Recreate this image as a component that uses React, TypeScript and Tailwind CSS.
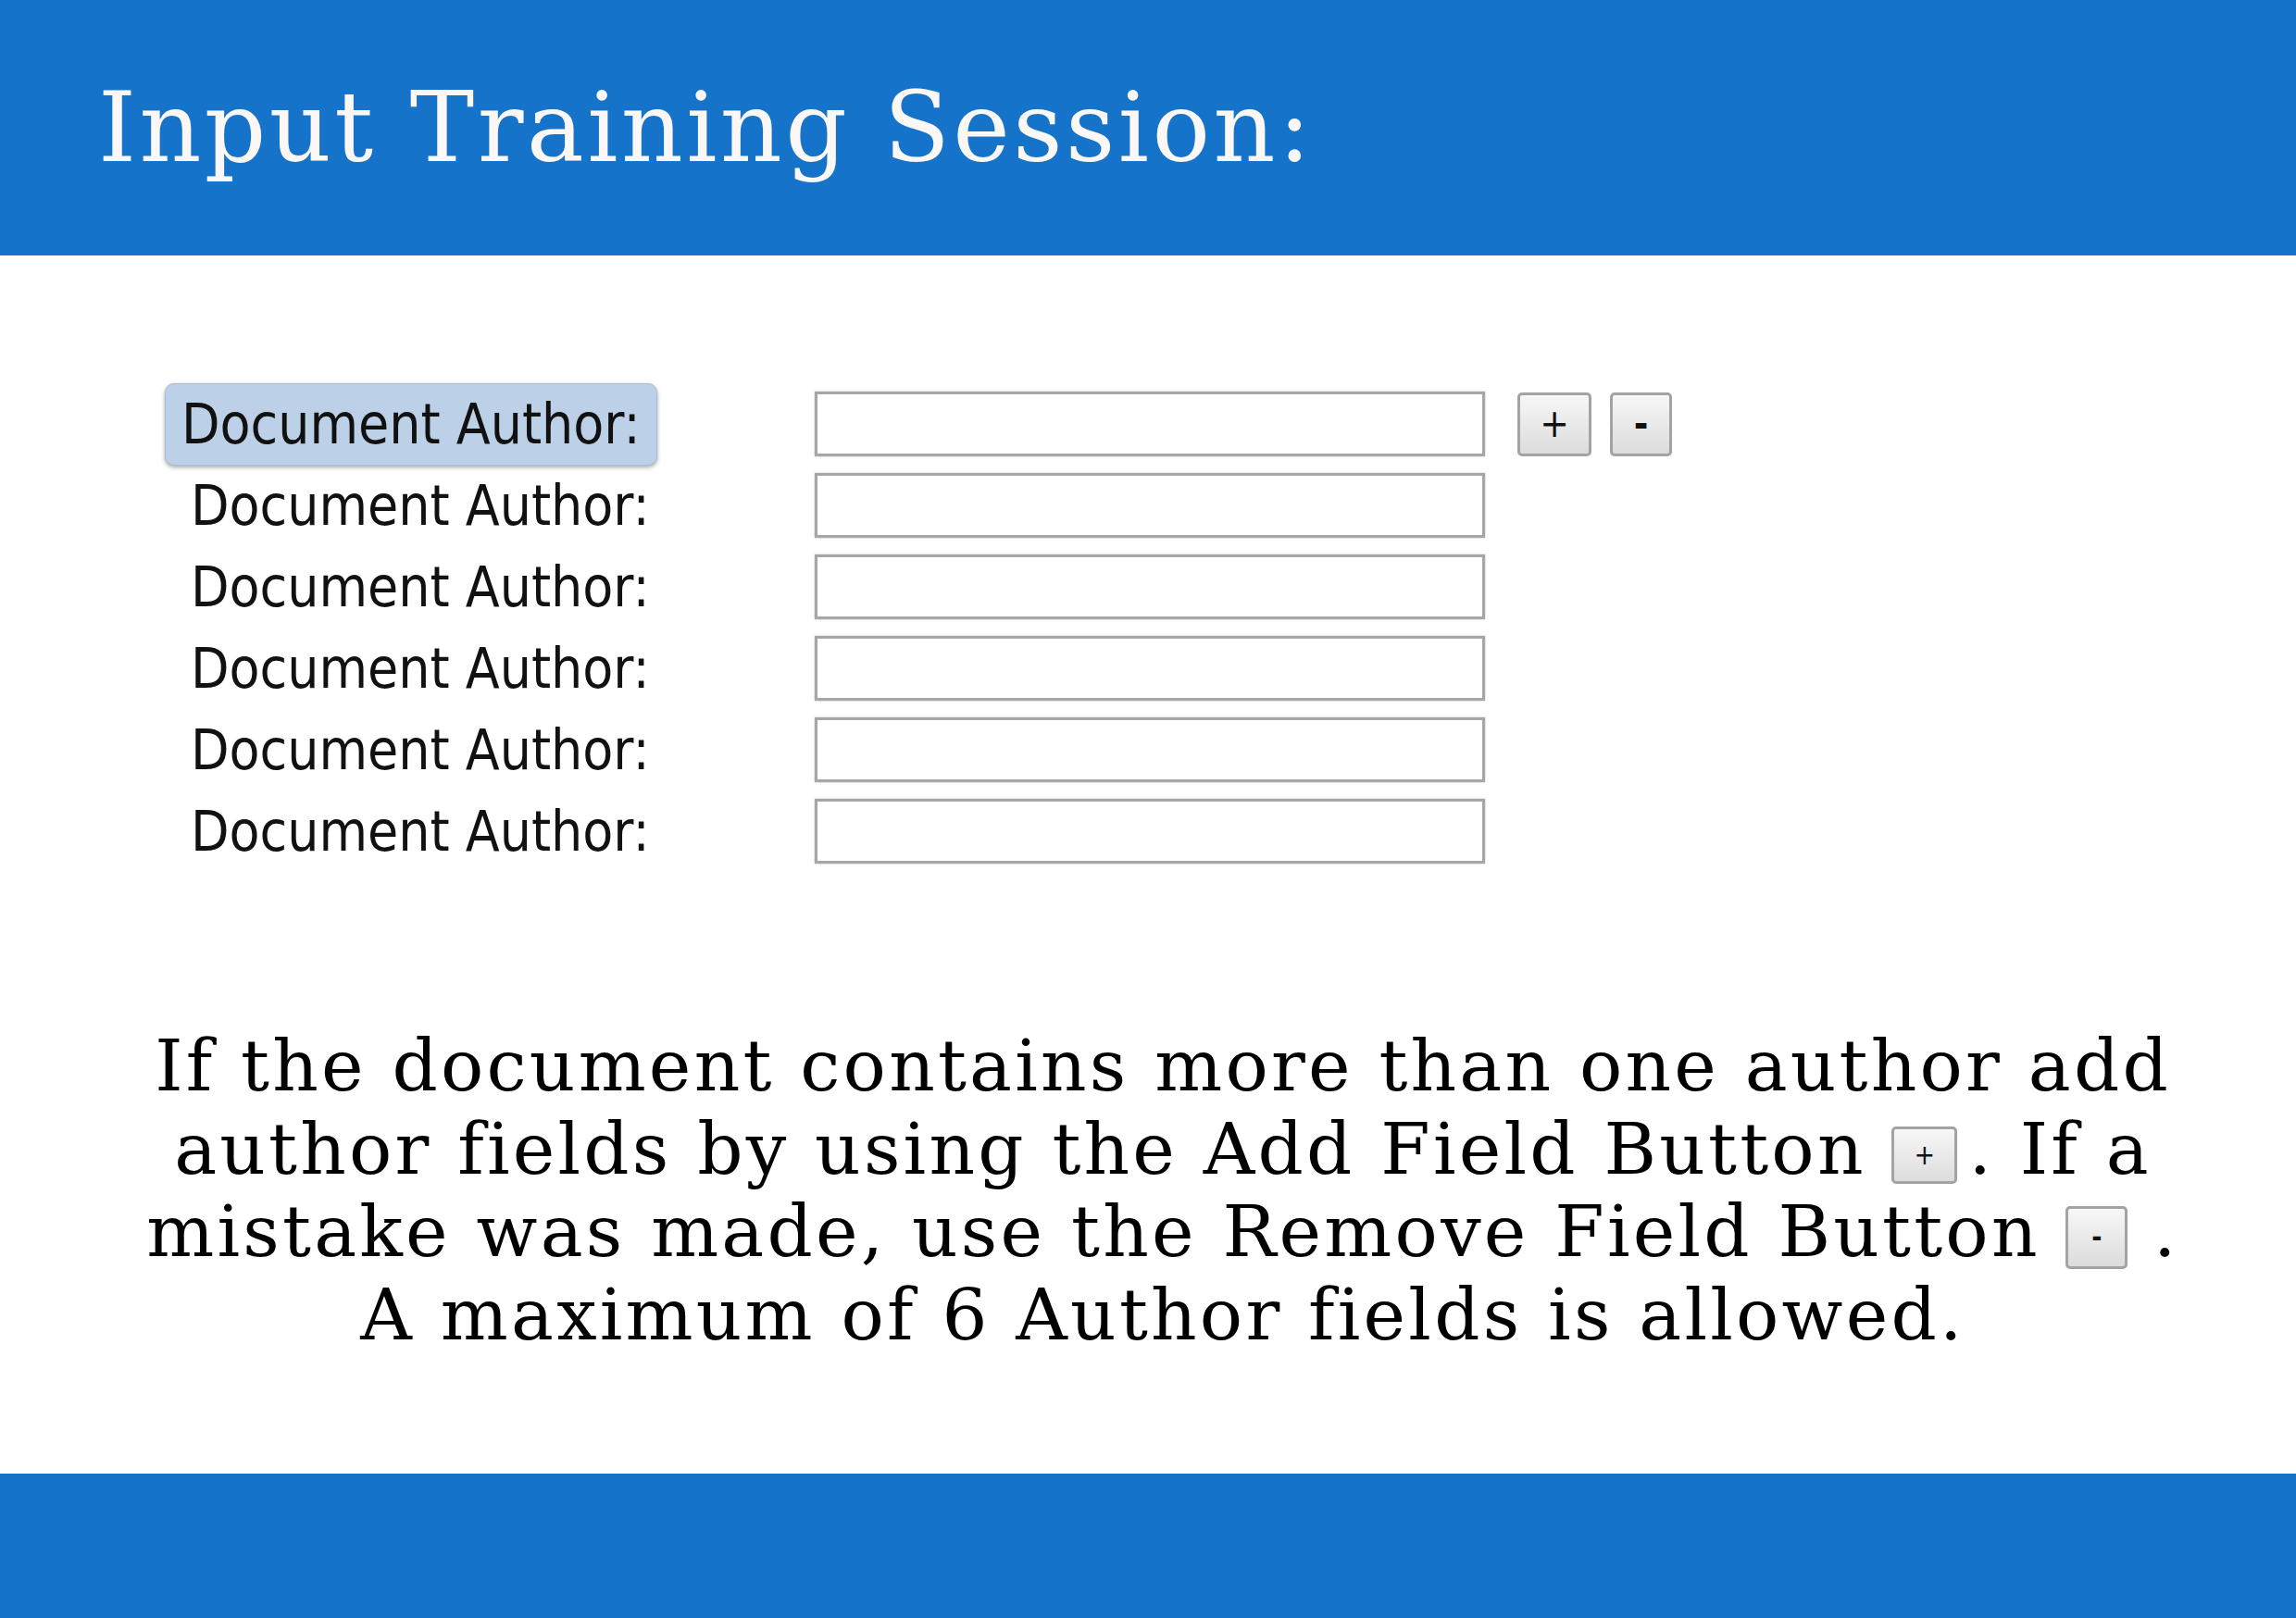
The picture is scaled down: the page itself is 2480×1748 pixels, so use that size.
import React from "react";

const serif = "font-['DejaVu_Serif',_'Liberation_Serif',_serif]";
const sansCond = "font-['DejaVu_Sans_Condensed',_'DejaVu_Sans',_sans-serif]";

function SmallButton({ sign, className }: { sign: string; className: string }) {
  return (
    <span
      className={`inline-flex items-center justify-center align-middle border-[3px] border-[#a3a3a3] rounded-[5px] bg-linear-to-b from-[#f7f7f7] to-[#dcdcdc] text-[#111] tracking-normal ${sansCond} ${className}`}
    >
      {sign}
    </span>
  );
}

function AuthorRow({ first }: { first?: boolean }) {
  return (
    <div className="flex items-center h-[70px]">
      <div className="w-[702px] flex items-center">
        {first ? (
          <div className="h-[89px] w-[532px] flex items-center pl-[17px] rounded-[10px] bg-[#bcd1e7] border border-[#a9bed6] shadow-[0_2px_4px_rgba(0,0,0,0.35)]">
            <span className={`text-[60px] leading-none text-[#111] ${sansCond}`}>Document Author:</span>
          </div>
        ) : (
          <span className={`pl-[28px] text-[60px] leading-none text-[#111] ${sansCond}`}>Document Author:</span>
        )}
      </div>
      <input
        type="text"
        className="w-[724px] h-[70px] bg-white border-[3px] border-[#a6a6a6] shadow-[0_0_2px_rgba(0,0,0,0.25)] outline-none"
      />
      {first && (
        <div className="flex gap-[20px] ml-[35px]">
          <SmallButton sign="+" className="w-[80px] h-[69px] text-[42px] leading-none" />
          <SmallButton sign="-" className="w-[67px] h-[69px] text-[42px] font-bold leading-none" />
        </div>
      )}
    </div>
  );
}

export default function App() {
  return (
    <div className="w-[2480px] h-[1748px] flex flex-col bg-white overflow-hidden">
      <header className="h-[276px] bg-[#1574ca] flex items-center pl-[106px]">
        <h1 className={`text-[104px] leading-none tracking-[3.4px] text-[#faf7f5] ${serif}`}>Input Training Session:</h1>
      </header>

      <main className="flex-1 flex flex-col">
        <div className="flex flex-col gap-[18px] pt-[147px] pl-[178px]">
          <AuthorRow first />
          <AuthorRow />
          <AuthorRow />
          <AuthorRow />
          <AuthorRow />
          <AuthorRow />
        </div>

        <p className={`mt-[174px] pl-[32px] text-center text-[77px] leading-[89.5px] tracking-[3.2px] text-black ${serif}`}>
          <span className="whitespace-nowrap">If the document contains more than one author add</span>
          <br />
          <span className="whitespace-nowrap">
            author fields by using the Add Field Button{" "}
            <SmallButton sign="+" className="w-[71px] h-[62px] mr-[12px] text-[30px] leading-none" />. If a
          </span>
          <br />
          <span className="whitespace-nowrap">
            mistake was made, use the Remove Field Button{" "}
            <SmallButton sign="-" className="w-[67px] h-[68px] text-[30px] font-bold leading-none" /> .
          </span>
          <br />
          <span className="whitespace-nowrap">A maximum of 6 Author fields is allowed.</span>
        </p>
      </main>

      <footer className="h-[156px] bg-[#1574ca]" />
    </div>
  );
}
